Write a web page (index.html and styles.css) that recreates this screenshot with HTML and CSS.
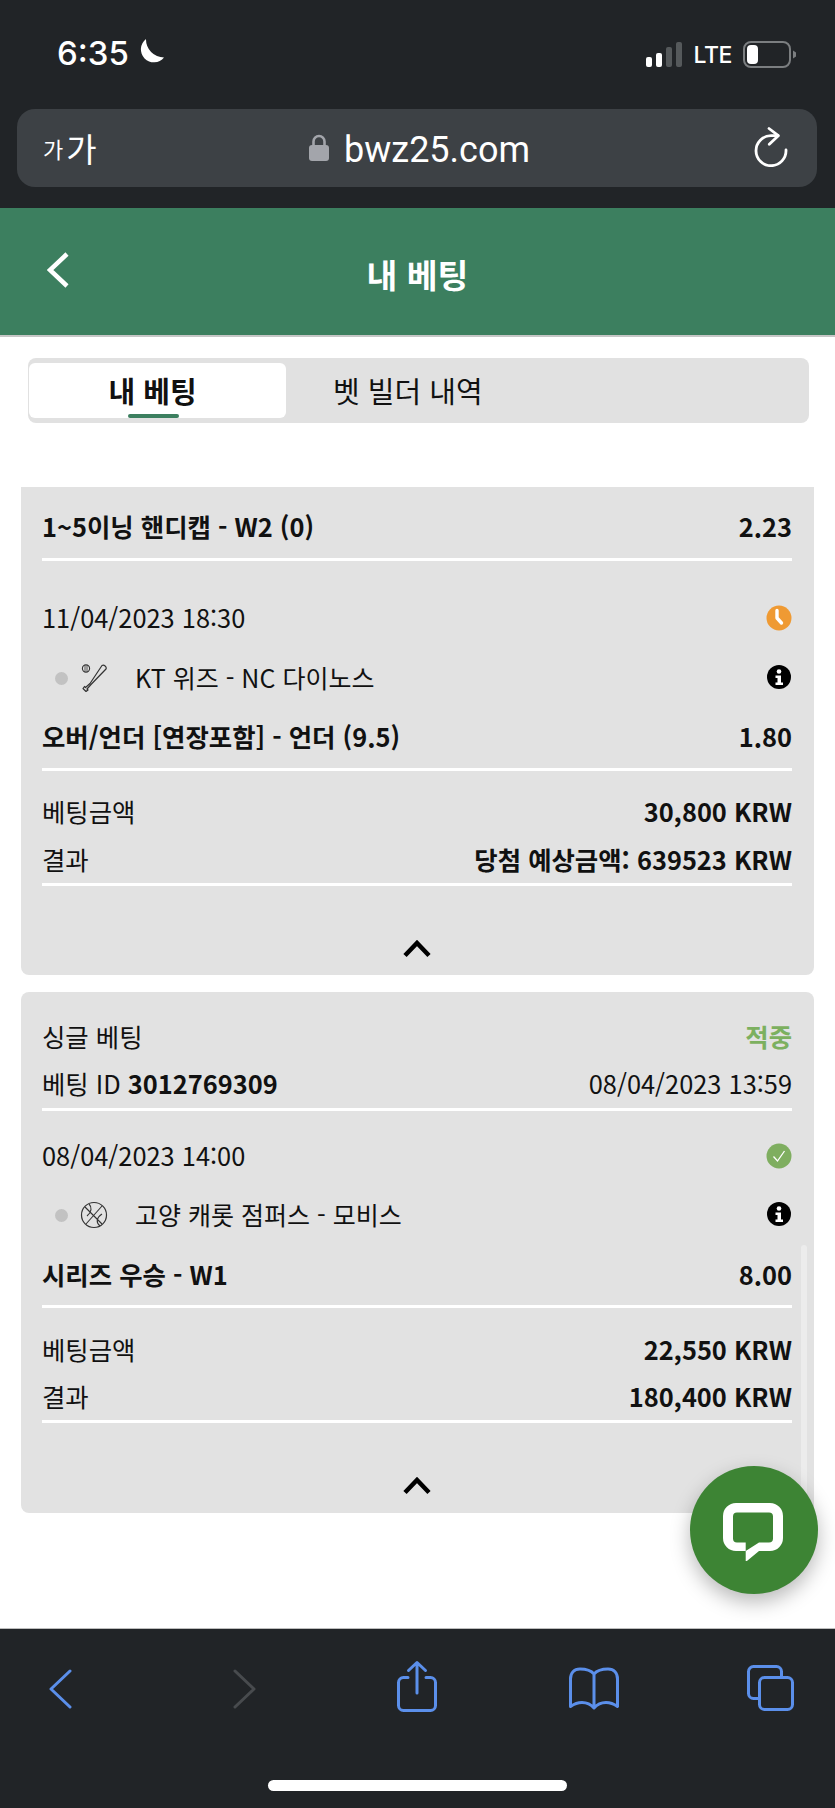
FILE: index.html
```html
<!DOCTYPE html>
<html lang="ko">
<head>
<meta charset="utf-8">
<title>내 베팅</title>
<link rel="stylesheet" href="styles.css">
</head>
<body>
<div class="screen">
  <header class="chrome">
    <div class="status">
      <div class="status-left">
        <span class="time">6:35</span>
        <svg class="moon" width="27" height="26" viewBox="0 0 27 26"><path d="M9 0A13 13 0 1 0 27 18.500 18 18 0 0 1 9 0z" fill="#fff"/></svg>
      </div>
      <div class="status-right">
        <svg width="37" height="25" viewBox="0 0 37 25" class="signal"><rect x="0" y="15" width="6" height="10" rx="2" fill="#fff"/><rect x="10" y="11" width="6" height="14" rx="2" fill="#fff"/><rect x="20" y="5" width="6" height="20" rx="2" fill="#55595b"/><rect x="30" y="0" width="6" height="25" rx="2" fill="#55595b"/></svg>
        <span class="lte">LTE</span>
        <svg width="54" height="28" viewBox="0 0 54 28" class="battery"><rect x="1" y="1" width="46" height="25" rx="7" fill="none" stroke="#7b7e80" stroke-width="2"/><rect x="4" y="4" width="11" height="19" rx="4" fill="#fff"/><path d="M50 9.500l3 2v4l-3 2z" fill="#7b7e80"/></svg>
      </div>
    </div>
    <div class="urlbar">
      <span class="aa"><span class="aa-small">가</span>가</span>
      <div class="url">
        <svg width="20" height="28" viewBox="0 0 20 28"><path d="M4.500 12V7.500a5.500 5.500 0 0 1 11 0V12" fill="none" stroke="#a3a5ab" stroke-width="2.600"/><rect x="0" y="11" width="20" height="16" rx="3" fill="#a3a5ab"/></svg>
        <span class="url-text">bwz25.com</span>
      </div>
      <svg class="reload" width="34" height="40" viewBox="0 0 34 40"><path d="M24 8.700H17A15 15 0 1 0 32 23" fill="none" stroke="#fff" stroke-width="2.800" stroke-linecap="round"/><path d="M15 1.500l9.300 7.200-9 8.600" fill="none" stroke="#fff" stroke-width="2.800" stroke-linecap="round" stroke-linejoin="round"/></svg>
    </div>
  </header>

  <div class="appbar">
    <svg class="appbar-back" width="22" height="36" viewBox="0 0 22 36"><path d="M20 2L3 18l17 16" fill="none" stroke="#fff" stroke-width="4.500"/></svg>
    <h1 class="appbar-title">내 베팅</h1>
  </div>

  <main class="content">
    <nav class="tabs">
      <div class="tab tab-active">내 베팅<span class="tab-mark"></span></div>
      <div class="tab">벳 빌더 내역</div>
    </nav>

    <section class="card card-first">
      <div class="row row-head rule"><b>1~5이닝 핸디캡 - W2 (0)</b><b>2.23</b></div>
      <div class="row row-date date-first"><span>11/04/2023 18:30</span>
        <svg width="26" height="26" viewBox="0 0 26 26"><circle cx="13" cy="13" r="12.500" fill="#ef9a33"/><path d="M11 5.500v7.500l4.500 5" fill="none" stroke="#fff" stroke-width="3.400" stroke-linecap="round" stroke-linejoin="round"/></svg>
      </div>
      <div class="row row-team">
        <div class="team">
          <span class="dot"></span>
          <svg class="sport" width="28" height="28" viewBox="0 0 28 28"><circle cx="6" cy="4.500" r="3.600" fill="none" stroke="#333" stroke-width="1.100"/><path d="M5 1.500v6M7 1.500v6" stroke="#333" stroke-width=".8"/><path d="M22 1.500c2-1 5 1 4 3.500L11 20.500l-4 4.500 1 1-2 1.500-3-3 1.500-2 1 1 4.500-4z" fill="none" stroke="#333" stroke-width="1.200" stroke-linejoin="round"/></svg>
          <span class="team-name">KT 위즈 - NC 다이노스</span>
        </div>
        <svg width="26" height="26" viewBox="0 0 26 26"><circle cx="13" cy="13" r="12" fill="#000"/><circle cx="13" cy="7.500" r="2.300" fill="#fff"/><path d="M9.500 11.500h5.500v7h2v2.500H9.500v-2.500h2v-4.500h-2z" fill="#fff"/></svg>
      </div>
      <div class="row row-market rule"><b>오버/언더 [연장포함] - 언더 (9.5)</b><b>1.80</b></div>
      <div class="row row-sum"><span>베팅금액</span><b>30,800 KRW</b></div>
      <div class="row row-next result-first rule"><span>결과</span><b>당첨 예상금액: 639523 KRW</b></div>
      <div class="card-foot">
        <svg width="28" height="18" viewBox="0 0 28 18"><path d="M2 15.500L14 3l12 12.500" fill="none" stroke="#000" stroke-width="4.500"/></svg>
      </div>
    </section>

    <section class="card card-second">
      <div class="row row-sum"><span>싱글 베팅</span><b class="won">적중</b></div>
      <div class="row row-next rule"><span>베팅 ID <b>3012769309</b></span><span>08/04/2023 13:59</span></div>
      <div class="row row-date date-second"><span>08/04/2023 14:00</span>
        <svg width="26" height="26" viewBox="0 0 26 26"><circle cx="13" cy="13" r="12.500" fill="#7fae60"/><path d="M7.500 13.500l4 4.500 7-10" fill="none" stroke="#fff" stroke-width="1.300"/></svg>
      </div>
      <div class="row row-team team-second">
        <div class="team">
          <span class="dot"></span>
          <svg class="sport" width="28" height="28" viewBox="0 0 28 28"><circle cx="14" cy="14" r="12.500" fill="none" stroke="#333" stroke-width="1.200"/><path d="M5 6l17 17M22 5L6 23M9 3c3 3 3 8-2 12M20 25c-4-3-4-8 2-12" fill="none" stroke="#333" stroke-width="1.100"/></svg>
          <span class="team-name">고양 캐롯 점퍼스 - 모비스</span>
        </div>
        <svg width="26" height="26" viewBox="0 0 26 26"><circle cx="13" cy="13" r="12" fill="#000"/><circle cx="13" cy="7.500" r="2.300" fill="#fff"/><path d="M9.500 11.500h5.500v7h2v2.500H9.500v-2.500h2v-4.500h-2z" fill="#fff"/></svg>
      </div>
      <div class="row row-market market-second rule"><b>시리즈 우승 - W1</b><b>8.00</b></div>
      <div class="row row-sum sum-second"><span>베팅금액</span><b>22,550 KRW</b></div>
      <div class="row row-next result-second rule"><span>결과</span><b>180,400 KRW</b></div>
      <div class="card-foot">
        <svg width="28" height="18" viewBox="0 0 28 18"><path d="M2 15.500L14 3l12 12.500" fill="none" stroke="#000" stroke-width="4.500"/></svg>
      </div>
    </section>

    <span class="scrollbar"></span>
    <button class="fab" aria-label="chat">
      <svg width="62" height="62" viewBox="0 -3 62 62"><path fill="#fff" fill-rule="evenodd" d="M13 1H47a13 13 0 0 1 13 13V36a13 13 0 0 1-13 13H36L22.700 60V49H13A13 13 0 0 1 0 36V14A13 13 0 0 1 13 1zM14 10.500a4 4 0 0 0-4 4V36.500a4 4 0 0 0 4 4h8.700V49L36 40.500H46a4 4 0 0 0 4-4V14.500a4 4 0 0 0-4-4z"/></svg>
    </button>
  </main>

  <footer class="toolbar">
    <div class="toolbar-icons">
      <svg class="tb-back" width="23" height="40" viewBox="0 0 23 40"><path d="M21 2L2 20l19 18" fill="none" stroke="#5b8fea" stroke-width="3" stroke-linecap="round" stroke-linejoin="round"/></svg>
      <svg class="tb-forward" width="23" height="40" viewBox="0 0 23 40"><path d="M2 2l19 18L2 38" fill="none" stroke="#484b4e" stroke-width="3" stroke-linecap="round" stroke-linejoin="round"/></svg>
      <svg class="tb-share" width="42" height="54" viewBox="0 0 42 54"><path d="M12 17.500H7.500a5 5 0 0 0-5 5V45.500a5 5 0 0 0 5 5H34.500a5 5 0 0 0 5-5V22.500a5 5 0 0 0-5-5H30M21 33V3M12.500 10.500L21 2.500l8.500 8" fill="none" stroke="#5b8fea" stroke-width="3" stroke-linecap="round" stroke-linejoin="round"/></svg>
      <svg class="tb-book" width="52" height="43" viewBox="0 0 52 43"><path d="M26 7C23 3.500 17 2 12 2 6 2 2.500 6 2.500 12V39.500C6 37 10 35.500 14 35.500 18.500 35.500 23 37.500 26 41 29 37.500 33.500 35.500 38 35.500 42 35.500 46 37 49.500 39.500V12C49.500 6 46 2 40 2 35 2 29 3.500 26 7zM26 7V41" fill="none" stroke="#5b8fea" stroke-width="3" stroke-linejoin="round"/></svg>
      <svg class="tb-tabs" width="49" height="48" viewBox="0 0 49 48"><path d="M35.500 12V7.500a5 5 0 0 0-5-5H7.500a5 5 0 0 0-5 5V29.500a5 5 0 0 0 5 5H13" fill="none" stroke="#5b8fea" stroke-width="3"/><rect x="13.500" y="13.500" width="33" height="32" rx="5" fill="none" stroke="#5b8fea" stroke-width="3"/></svg>
    </div>
    <span class="home"></span>
  </footer>
</div>
</body>
</html>
```
FILE: styles.css
```css
* { box-sizing: border-box; }
html, body { margin: 0; padding: 0; background: #fff; }
body { font-family: "Noto Sans CJK KR", "Noto Sans", sans-serif; color: #111; }
svg { display: block; flex: none; }

.screen { width: 835px; height: 1808px; display: flex; flex-direction: column; overflow: hidden; }

/* browser chrome */
.chrome { height: 208px; background: #212427; padding: 0 18px 0 17px; flex: none; color: #fff; }
.status { height: 109px; display: flex; justify-content: space-between; align-items: flex-start; padding: 38px 20px 0 40px; }
.status-left { display: flex; align-items: center; gap: 8px; }
.time { font: 500 33px/30px Inter, Roboto, sans-serif; }
.moon { margin-top: -2px; }
.status-right { display: flex; align-items: center; gap: 10px; margin-top: 2px; }
.lte { font: 500 23px/26px Inter, Roboto, sans-serif; letter-spacing: -0.4px; }
.battery { margin-top: 1px; margin-left: 1px; }
.urlbar { height: 78px; background: #3d4145; border-radius: 18px; display: flex; align-items: center; justify-content: space-between; padding: 0 29px 0 26px; position: relative; }
.aa { font: 400 33px/1 "Noto Sans CJK KR", sans-serif; display: flex; align-items: center; gap: 3px; }
.aa-small { font-size: 22px; }
.url { position: absolute; left: 292px; top: 0; bottom: 0; display: flex; align-items: center; gap: 15px; font: 400 36px/1 Roboto, sans-serif; color: #fff; }
.url-text { padding-top: 4px; }
.reload { margin-top: -2px; }

/* app header */
.appbar { height: 129px; background: #3c7f5f; border-bottom: 2px solid #c6c6c6; flex: none; display: flex; align-items: center; justify-content: center; position: relative; }
.appbar-back { position: absolute; left: 47px; top: 44px; }
.appbar-title { margin: 4px 0 0; font-size: 33.5px; line-height: 44px; font-weight: 700; color: #fff; }

/* content */
.content { flex: 1; position: relative; padding: 21px 21px 0; }
.tabs { margin: 0 5px 0 7px; height: 65px; background: #e1e1e1; border-radius: 8px; padding: 5px 1px; display: flex; }
.tab { position: relative; width: 257px; display: flex; align-items: center; justify-content: center; font-size: 29px; color: #111; }
.tab-active { background: #fff; border-radius: 6px; font-weight: 700; padding: 0 10px 2px 0; }
.tab + .tab { justify-content: flex-start; padding-left: 47px; padding-bottom: 2px; }
.tab-mark { position: absolute; left: 99px; bottom: 0; width: 51px; height: 4px; background: #3c7f5f; border-radius: 2px; }

.card { background: #e2e2e2; padding: 0 22px 0 21px; display: flex; flex-direction: column; }
.card-first { margin-top: 64px; height: 488px; border-radius: 0 0 8px 8px; padding-top: 11px; }
.card-second { margin-top: 17px; height: 521px; border-radius: 8px; padding-top: 24px; }

.row { display: flex; justify-content: space-between; align-items: center; font-size: 25.4px; flex: none; }
.row b { font-weight: 700; }
.rule { border-bottom: 3px solid #fff; }
.row-head { height: 63px; padding-bottom: 4px; }
.row-date { height: 48px; }
.row-date > span { padding-bottom: 3px; }
.date-first { margin-top: 33px; }
.date-second { margin-top: 21px; }
.row-team { height: 48px; margin-top: 12px; }
.row-team > svg { margin-top: -2px; }
.team-second { margin-top: 11px; }
.team-name { padding-bottom: 3px; font-size: 25px; }
.row-market { height: 57px; margin-top: 12px; padding-bottom: 11px; }
.market-second { height: 55px; margin-top: 14px; padding-bottom: 11px; }
.row-sum { height: 44px; margin-top: 20px; }
.row-sum > span, .row-sum > b { padding-bottom: 4px; }
.card-second > .row-sum:first-child { margin-top: 0; }
.row-next { height: 47px; margin-top: 4px; padding-top: 1px; align-items: flex-start; }
.result-first { padding-top: 2px; }
.result-second { height: 46px; }
.sum-second { margin-top: 21px; }
.won { color: #7cb05f; }
.team { display: flex; align-items: center; margin-left: 13px; }
.dot { width: 13px; height: 13px; border-radius: 50%; background: #c2c2c2; }
.sport { margin: 0 27px 0 12px; }
.card-foot { flex: 1; display: flex; justify-content: center; padding-top: 54px; }

.scrollbar { position: absolute; left: 801px; top: 908px; width: 6px; height: 265px; background: #ececec; border-radius: 3px; }
.fab { position: absolute; left: 690px; top: 1129px; width: 128px; height: 128px; border: 0; padding: 0; border-radius: 50%; background: #3d8434; box-shadow: 0 8px 20px rgba(0,0,0,.28); display: flex; align-items: center; justify-content: center; }

/* bottom toolbar */
.toolbar { height: 180px; background: #212427; border-top: 1px solid #bdbdbd; flex: none; display: flex; flex-direction: column; align-items: center; position: relative; }
.toolbar-icons { width: 100%; height: 151px; display: flex; align-items: flex-start; padding-left: 49px; }
.tb-back { margin-top: 40px; }
.tb-forward { margin: 40px 0 0 161px; }
.tb-share { margin: 31px 0 0 140px; }
.tb-book { margin: 38px 0 0 130px; }
.tb-tabs { margin: 35px 0 0 126px; }
.home { width: 299px; height: 11px; background: #fff; border-radius: 6px; }
```
